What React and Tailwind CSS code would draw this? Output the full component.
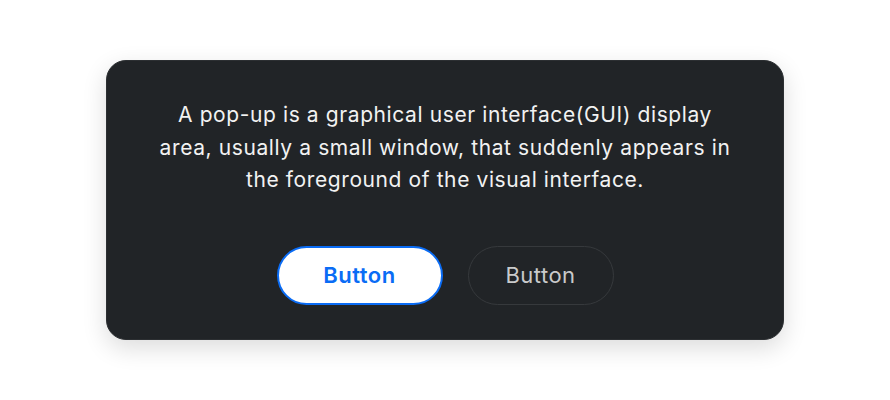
import React from 'react';

export default function App() {
  return (
    <div className="w-[890px] h-[400px] bg-white flex items-start justify-center pt-[60px]" style={{ fontFamily: 'Inter, "Noto Sans", sans-serif' }}>
      <div className="w-[678px] h-[280px] rounded-[20px] bg-[#212427] border border-[#2c2f32] shadow-[0_8px_24px_rgba(0,0,0,0.14)] flex flex-col items-center pt-[38px]">
        <p className="w-[572px] text-center text-[21px] leading-[32.5px] tracking-[0.6px] text-[#f2f2f2]">
          A pop-up is a graphical user interface(GUI) display area, usually a small window, that suddenly appears in the foreground of the visual interface.
        </p>
        <div className="flex gap-[25px] mt-[49px]">
          <button className="w-[166px] h-[59px] rounded-full bg-white border-2 border-[#0a6cf5] text-[#0a6cf5] text-[22px] tracking-[0.5px] font-semibold">
            Button
          </button>
          <button className="w-[146px] h-[59px] rounded-full border border-[#36393c] text-[#c9cacb] text-[22px] tracking-[0.5px]">
            Button
          </button>
        </div>
      </div>
    </div>
  );
}
